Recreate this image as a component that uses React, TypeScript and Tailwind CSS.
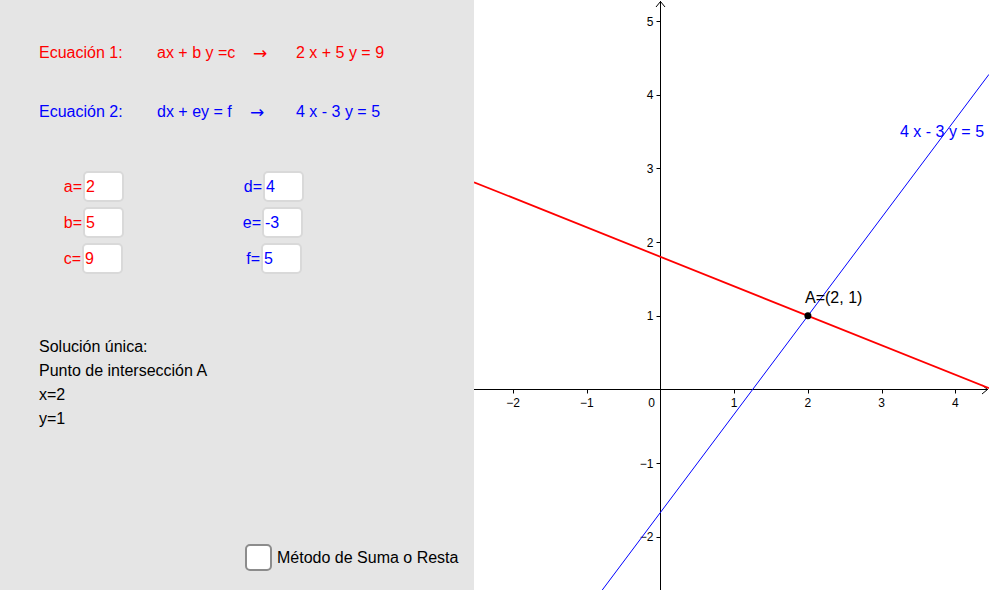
const W = 515;
const H = 590;
const ox = 186.5;
const oy = 389.5;
const u = 73.7;

const px = (x: number) => ox + x * u;
const py = (y: number) => oy - y * u;

function Graph() {
  const xTicks = [-2, -1, 1, 2, 3, 4];
  const yTicks = [-2, -1, 1, 2, 3, 4, 5];
  const xl = (0 - ox) / u;
  const xr = (W - ox) / u;
  const red = (x: number) => (9 - 2 * x) / 5;
  const blue = (x: number) => (4 * x - 5) / 3;

  return (
    <svg width={W} height={H} viewBox={`0 0 ${W} ${H}`} className="block shrink-0 bg-white" style={{ fontFamily: '"Liberation Sans", Arial, sans-serif' }}>
      {/* axes */}
      <line x1={0} y1={oy} x2={W - 1} y2={oy} stroke="#000" strokeWidth={1} />
      <line x1={ox} y1={1} x2={ox} y2={H} stroke="#000" strokeWidth={1} />
      <polyline points={`${ox - 4.5},7 ${ox},1.5 ${ox + 4.5},7`} fill="none" stroke="#000" strokeWidth={1} />
      <polyline points={`${W - 7},${oy - 4.5} ${W - 1.5},${oy} ${W - 7},${oy + 4.5}`} fill="none" stroke="#000" strokeWidth={1} />

      {xTicks.map((k) => (
        <g key={`x${k}`}>
          <line x1={Math.round(px(k)) + 0.5} y1={oy} x2={Math.round(px(k)) + 0.5} y2={oy + 4} stroke="#000" strokeWidth={1} />
          <text x={px(k)} y={oy + 17} fontSize={12} textAnchor="middle" fill="#000">
            {k < 0 ? `\u2212${-k}` : k}
          </text>
        </g>
      ))}
      <text x={ox - 9} y={oy + 17} fontSize={12} textAnchor="middle" fill="#000">0</text>

      {yTicks.map((k) => (
        <g key={`y${k}`}>
          <line x1={ox - 4} y1={Math.round(py(k)) + 0.5} x2={ox} y2={Math.round(py(k)) + 0.5} stroke="#000" strokeWidth={1} />
          <text x={ox - 7} y={py(k) + 4.5} fontSize={12} textAnchor="end" fill="#000">
            {k < 0 ? `\u2212${-k}` : k}
          </text>
        </g>
      ))}

      {/* lines */}
      <line x1={px(xl)} y1={py(red(xl))} x2={px(xr)} y2={py(red(xr))} stroke="#ff0000" strokeWidth={1.8} />
      <line x1={px(xl)} y1={py(blue(xl))} x2={px(xr)} y2={py(blue(xr))} stroke="#0000ff" strokeWidth={1} />

      <circle cx={px(2)} cy={py(1)} r={3.5} fill="#000" />
      <text x={331} y={303} fontSize={16} fill="#000">A=(2, 1)</text>
      <text x={426} y={137} fontSize={16} fill="#0000ff">4 x - 3 y = 5</text>
    </svg>
  );
}

function Field({ label, value, color, shift = 0 }: { label: string; value: string; color: string; shift?: number }) {
  return (
    <div className="flex h-[31px] items-center justify-end" style={{ marginRight: shift }}>
      <span className={`${color} pr-[1px]`}>{label}</span>
      <div className={`flex h-[31px] w-[41px] items-center rounded-[5px] border-2 border-[#d9d9d9] bg-white pl-[1px] ${color}`}>
        {value}
      </div>
    </div>
  );
}

export default function App() {
  return (
    <div className="flex h-[590px] w-[989px] overflow-hidden" style={{ fontFamily: '"Liberation Sans", Arial, sans-serif' }}>
      <div className="flex h-[590px] w-[474px] shrink-0 flex-col bg-[#e5e5e5] text-[16px] leading-[18px]">
        <div className="ml-[39px] mt-[44px] flex text-[#ff0000]">
          <span className="w-[118px]">Ecuación 1:</span>
          <span className="w-[96px]">ax + b y =c</span>
          <span className="w-[43px] font-['DejaVu_Sans'] text-[17px] leading-[18px]">→</span>
          <span>2 x + 5 y = 9</span>
        </div>
        <div className="ml-[39px] mt-[41px] flex text-[#0000ff]">
          <span className="w-[118px]">Ecuación 2:</span>
          <span className="w-[93px]">dx + ey = f</span>
          <span className="w-[46px] font-['DejaVu_Sans'] text-[17px] leading-[18px]">→</span>
          <span>4 x - 3 y = 5</span>
        </div>

        <div className="mt-[50px] flex">
          <div className="flex w-[124px] flex-col gap-[5px]">
            <Field label="a=" value="2" color="text-[#ff0000]" />
            <Field label="b=" value="5" color="text-[#ff0000]" />
            <Field label="c=" value="9" color="text-[#ff0000]" shift={1} />
          </div>
          <div className="flex w-[180px] flex-col gap-[5px]">
            <Field label="d=" value="4" color="text-[#0000ff]" />
            <Field label="e=" value="-3" color="text-[#0000ff]" shift={1} />
            <Field label="f=" value="5" color="text-[#0000ff]" shift={2} />
          </div>
        </div>

        <div className="ml-[39px] mt-[61px] flex flex-col leading-[24px] text-black">
          <span>Solución única:</span>
          <span>Punto de intersección A</span>
          <span>x=2</span>
          <span>y=1</span>
        </div>

        <div className="mb-[19px] ml-[245px] mt-auto flex items-center gap-[5px] text-black">
          <div className="h-[27px] w-[27px] rounded-[5px] border-2 border-[#8c8c8c] bg-white" />
          <span>Método de Suma o Resta</span>
        </div>
      </div>
      <Graph />
    </div>
  );
}
